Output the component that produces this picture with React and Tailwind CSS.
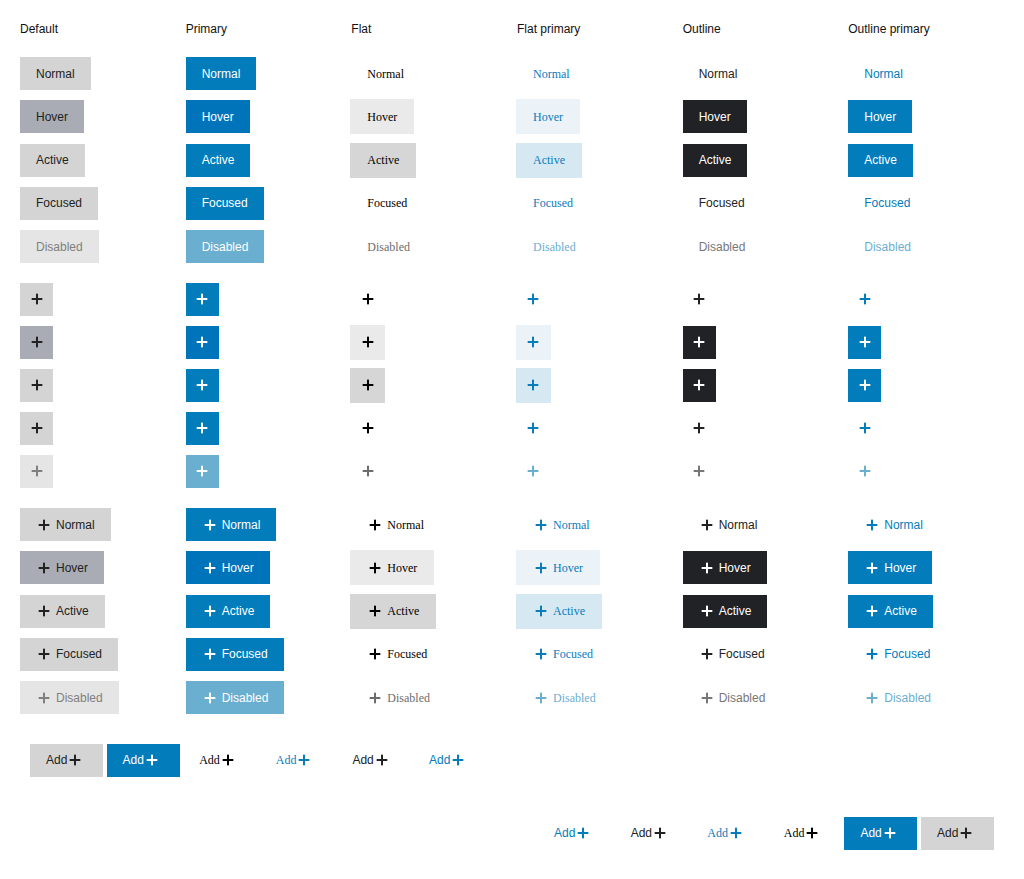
const variants = [
  { key: "default", title: "Default", flat: false },
  { key: "primary", title: "Primary", flat: false },
  { key: "flat", title: "Flat", flat: true },
  { key: "flatPrimary", title: "Flat primary", flat: true },
  { key: "outline", title: "Outline", flat: false },
  { key: "outlinePrimary", title: "Outline primary", flat: false },
];

const states = ["Normal", "Hover", "Active", "Focused", "Disabled"];

const styles = {
  default: {
    Normal: "bg-[#d4d4d4] text-[#222]",
    Hover: "bg-[#a9acb4] text-[#222]",
    Active: "bg-[#d4d4d4] text-[#222]",
    Focused: "bg-[#d4d4d4] text-[#222]",
    Disabled: "bg-[#e5e5e5] text-[#808080]",
  },
  primary: {
    Normal: "bg-[#027cbb] text-white",
    Hover: "bg-[#0074ba] text-white",
    Active: "bg-[#027cbb] text-white",
    Focused: "bg-[#027cbb] text-white",
    Disabled: "bg-[#6aaed0] text-white",
  },
  flat: {
    Normal: "text-black",
    Hover: "bg-[#eaeaea] text-black",
    Active: "bg-[#d6d6d6] text-black",
    Focused: "text-black",
    Disabled: "text-[#6d6d6d]",
  },
  flatPrimary: {
    Normal: "text-[#0a7bbb]",
    Hover: "bg-[#ebf3f9] text-[#0a7bbb]",
    Active: "bg-[#d6e9f2] text-[#0a7bbb]",
    Focused: "text-[#0a7bbb]",
    Disabled: "text-[#6aaed0]",
  },
  outline: {
    Normal: "text-[#222]",
    Hover: "bg-[#212226] text-white",
    Active: "bg-[#212226] text-white",
    Focused: "text-[#222]",
    Disabled: "text-[#777]",
  },
  outlinePrimary: {
    Normal: "text-[#027cbb]",
    Hover: "bg-[#027cbb] text-white",
    Active: "bg-[#027cbb] text-white",
    Focused: "text-[#027cbb]",
    Disabled: "text-[#6aaed0]",
  },
};

const Plus = () => (
  <svg width="16" height="16" viewBox="0 0 16 16" className="shrink-0" fill="currentColor">
    <rect x="2.67" y="7" width="10.67" height="2" />
    <rect x="7" y="2.67" width="2" height="10.67" />
  </svg>
);

const fontFor = (flat) =>
  flat ? "font-['Liberation_Serif',serif]" : "font-['Liberation_Sans',Arial,sans-serif]";

const TextButton = ({ v, state, icon }) => (
  <button
    className={`inline-flex items-center gap-1 leading-[14px] text-[12px] ${fontFor(v.flat)} ${
      v.flat ? "h-[35px] px-[17px] -ml-px" : "h-[33px] px-4"
    } ${styles[v.key][state]}`}
  >
    {icon && <Plus />}
    <span>{state}</span>
  </button>
);

const IconButton = ({ v, state }) => (
  <button
    className={`inline-flex items-center justify-center ${
      v.flat ? "w-[35px] h-[35px] -ml-px" : "w-[33px] h-[33px]"
    } ${styles[v.key][state]}`}
  >
    <Plus />
  </button>
);

const AddButton = ({ v }) => (
  <button
    className={`inline-flex items-center w-[73px] h-[33px] pl-4 leading-[14px] text-[12px] ${fontFor(v.flat)} ${styles[v.key].Normal}`}
  >
    <span>Add</span>
    <Plus />
  </button>
);

export default function App() {
  return (
    <div className="min-h-screen bg-white px-5 pt-[21.7px] text-[12px] text-[#222] font-['Liberation_Sans',Arial,sans-serif]">
      <div className="grid grid-cols-[repeat(6,165.67px)]">
        {variants.map((v) => (
          <div key={v.key} className="flex flex-col">
            <div className="h-[14px] leading-[14px] mb-[21.3px] text-[#111]">{v.title}</div>

            {/* text buttons */}
            <div className="flex flex-col gap-[10px]">
              {states.map((s) => (
                <div key={s} className="h-[33.25px] flex items-center">
                  <TextButton v={v} state={s} />
                </div>
              ))}
            </div>

            {/* icon only */}
            <div className="flex flex-col gap-[10px] mt-[19.75px]">
              {states.map((s) => (
                <div key={s} className="h-[33px] flex items-center">
                  <IconButton v={v} state={s} />
                </div>
              ))}
            </div>

            {/* icon + text */}
            <div className="flex flex-col gap-[10px] mt-[20px]">
              {states.map((s) => (
                <div key={s} className="h-[33.25px] flex items-center">
                  <TextButton v={v} state={s} icon />
                </div>
              ))}
            </div>
          </div>
        ))}
      </div>

      <div className="flex gap-[3.6px] ml-[10px] mt-[29.75px]">
        {variants.map((v) => (
          <AddButton key={v.key} v={v} />
        ))}
      </div>

      <div className="flex flex-row-reverse gap-[3.6px] mr-[10px] mt-[40px]">
        {variants.map((v) => (
          <AddButton key={v.key} v={v} />
        ))}
      </div>
    </div>
  );
}
